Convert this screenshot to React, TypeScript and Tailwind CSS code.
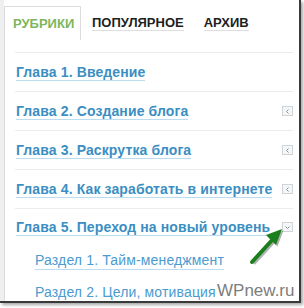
import React from "react";

const Btn = ({ down }: { down?: boolean }) => (
  <span className="flex h-[10px] w-[11px] items-center justify-center border border-[#cfd4d8] bg-[#f4f6f7]">
    <svg width="7" height="7" viewBox="0 0 7 7">
      {down ? (
        <path d="M1.5 2.5 L3.5 4.5 L5.5 2.5" stroke="#8a9096" strokeWidth="1" fill="none" />
      ) : (
        <path d="M4.5 1.5 L2.5 3.5 L4.5 5.5" stroke="#8a9096" strokeWidth="1" fill="none" />
      )}
    </svg>
  </span>
);

const chapters = [
  { t: "Глава 1. Введение", btn: false },
  { t: "Глава 2. Создание блога", btn: true },
  { t: "Глава 3. Раскрутка блога", btn: true },
  { t: "Глава 4. Как заработать в интернете", btn: true },
];

export default function App() {
  return (
    <div className="relative h-[308px] w-[304px] overflow-hidden bg-white" style={{ fontFamily: '"Liberation Sans", Arial, sans-serif' }}>
      <div className="relative flex h-[303px] w-[301px] overflow-hidden border-b-2 border-r-2 border-[#3a3a3a] bg-white shadow-[2px_2px_3px_rgba(0,0,0,0.35)]">
        <div className="w-[4px] shrink-0 bg-[#efefef]" />
        <div className="mt-[6px] flex min-h-0 flex-1 flex-col overflow-hidden border-l border-[#dcdcdc]">
          <div className="flex h-[34px] shrink-0 items-stretch">
            <div className="flex w-[76px] items-center border-r border-t border-[#dcdcdc] pl-[8px] text-[13px] font-bold text-[#7cb65e]">
              РУБРИКИ
            </div>
            <div className="ml-[11px] flex items-center">
              <span className="border-b border-[#dedede] text-[13px] font-bold leading-[15px] text-[#1e1e1e]">ПОПУЛЯРНОЕ</span>
            </div>
            <div className="ml-[20px] flex items-center">
              <span className="border-b border-[#dedede] text-[13px] font-bold leading-[15px] text-[#1e1e1e]">АРХИВ</span>
            </div>
          </div>
          <div className="ml-[10px] mr-[6px] mt-[12px] shrink-0 border-t border-[#ececec]">
            {chapters.map((c) => (
              <div key={c.t} className="flex h-[39px] items-center justify-between border-b border-[#ececec] pl-[1px]">
                <span className="border-b border-[#b9dcf0] text-[14px] font-bold leading-[16px] tracking-[0.12px] text-[#3b8ec2]">{c.t}</span>
                {c.btn && <Btn />}
              </div>
            ))}
            <div className="flex h-[36px] items-center justify-between pl-[1px]">
              <span className="border-b border-[#b9dcf0] text-[14px] font-bold leading-[16px] tracking-[0.12px] text-[#3b8ec2]">
                Глава 5. Переход на новый уровень
              </span>
              <Btn down />
            </div>
            <div className="flex h-[32px] items-center pl-[20px]">
              <span className="border-b border-[#b9dcf0] text-[14px] leading-[17px] tracking-[0.15px] text-[#4a9bd0]">Раздел 1. Тайм-менеджмент</span>
            </div>
            <div className="flex h-[32px] items-center pl-[20px]">
              <span className="border-b border-[#b9dcf0] text-[14px] leading-[17px] tracking-[0.15px] text-[#4a9bd0]">Раздел 2. Цели, мотивация</span>
            </div>
          </div>
        </div>
        <div className="absolute left-[217px] top-[281px] text-[17px] leading-[20px] text-[#7d7d7d]">WPnew.ru</div>
        <svg className="absolute left-[240px] top-[220px]" width="50" height="50" viewBox="0 0 50 50">
          <g transform="translate(1.5,1.5)" opacity="0.3">
            <line x1="12" y1="42" x2="34" y2="18" stroke="#000" strokeWidth="4" />
            <polygon points="42,9 26,15 36,25" fill="#000" />
          </g>
          <line x1="12" y1="42" x2="34" y2="18" stroke="#1b7f1b" strokeWidth="4" strokeLinecap="round" />
          <polygon points="42,9 26,15 36,25" fill="#1b7f1b" />
        </svg>
      </div>
    </div>
  );
}
